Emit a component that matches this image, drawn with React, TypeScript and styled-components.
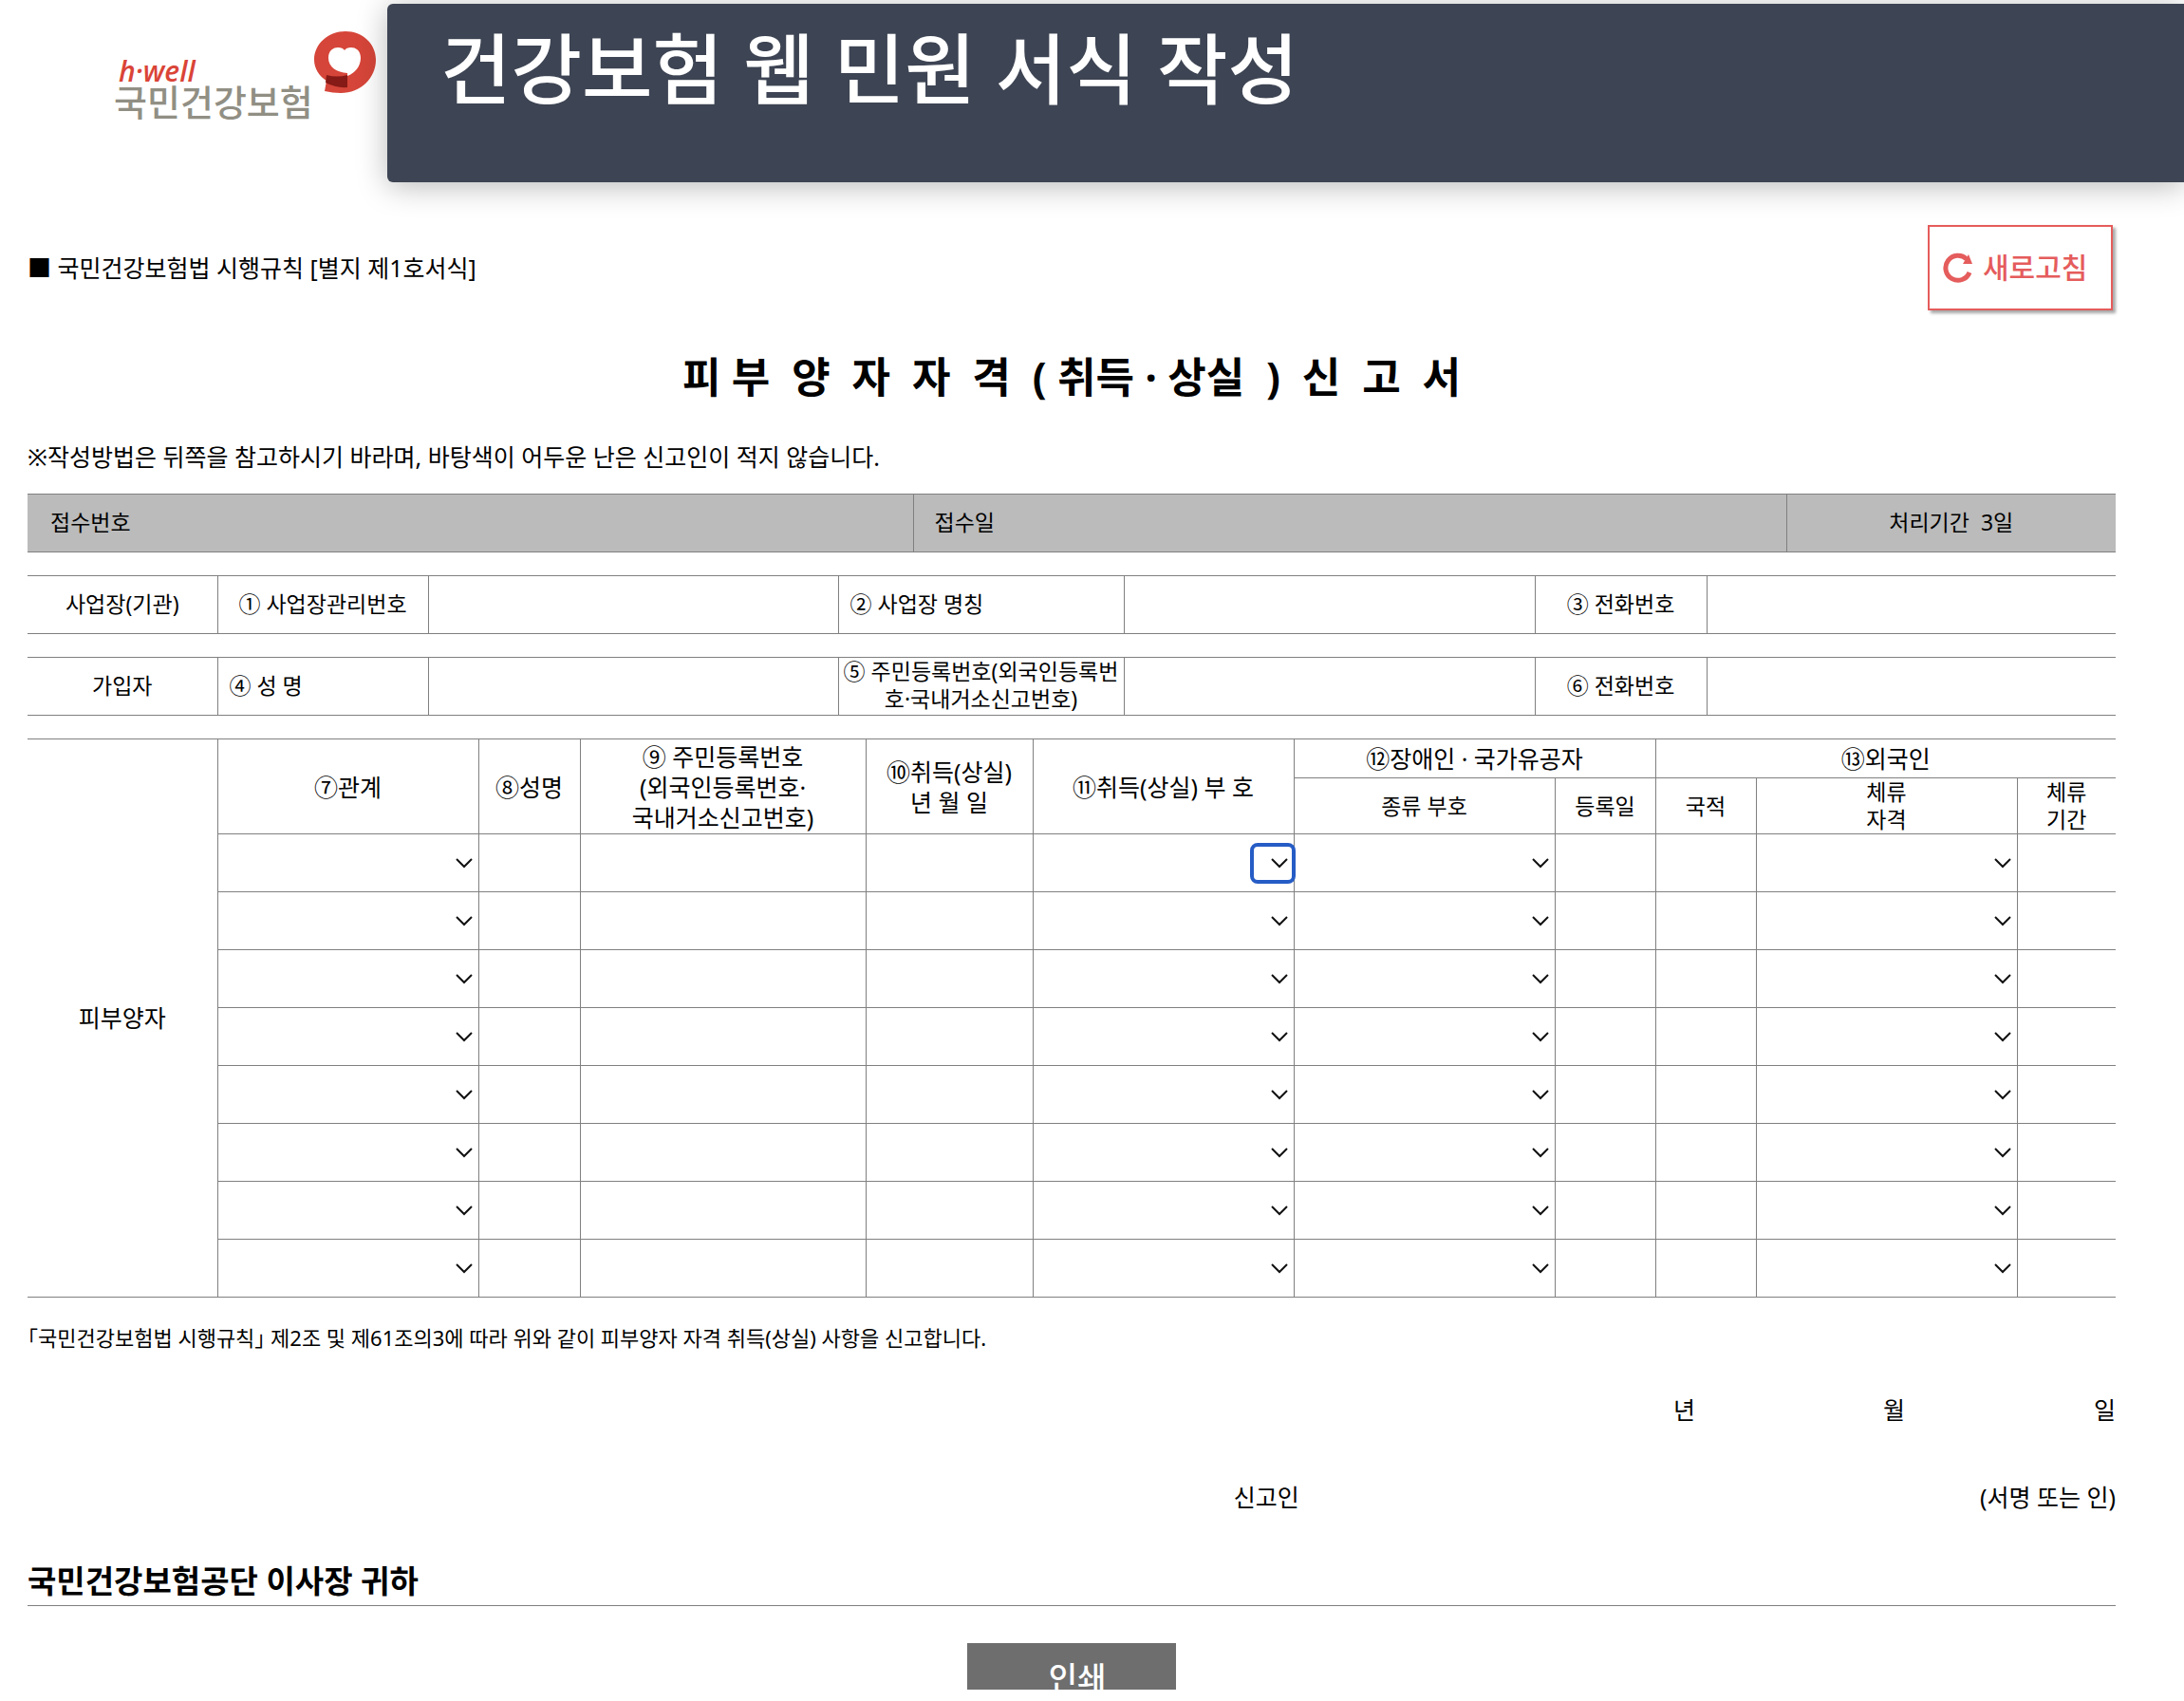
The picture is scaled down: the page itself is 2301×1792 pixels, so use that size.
import React from "react";
import styled, { createGlobalStyle } from "styled-components";

const line = "#808080";
const COLS = [200, 275, 107, 301, 176, 275, 275, 106, 106, 275, 104];

const Global = createGlobalStyle`
  * { box-sizing: border-box; }
  body {
    margin: 0;
    background: #fff;
    color: #000;
    font-family: "Noto Sans", "Noto Sans CJK KR", sans-serif;
    font-size: 25px;
    line-height: 32px;
  }
`;

const Page = styled.div`
  overflow: hidden;
`;

const Header = styled.header`
  display: flex;
  padding-top: 4px;
  height: 192px;
`;

const Brand = styled.a`
  width: 408px;
  flex: none;
  padding: 28px 0 0 120px;
`;

const Banner = styled.div`
  flex: 1;
  border-radius: 6px 0 0 6px;
  background: #3d4453;
  box-shadow: 0 4px 32px rgba(0, 0, 0, 0.28);
  padding: 8px 56px;
`;

const BannerTitle = styled.h1`
  margin: 0;
  color: #fff;
  font-size: 81px;
  line-height: 120px;
  font-weight: 500;
`;

const Form = styled.main`
  padding: 45px 72px 0 29px;
`;

const TopLine = styled.div`
  display: flex;
  justify-content: space-between;
  align-items: center;
`;

const Refresh = styled.button`
  display: flex;
  align-items: center;
  gap: 10px;
  width: 195px;
  height: 90px;
  margin-right: 3px;
  padding: 0 14px;
  border: 2px solid #e55c5c;
  background: #fff;
  box-shadow: 3px 3px 3px rgba(0, 0, 0, 0.35);
  color: #e55c5c;
  font: inherit;
  font-size: 30px;
  font-weight: 500;
  white-space: nowrap;
`;

const Title = styled.h2`
  margin: 38px 0 0;
  font-size: 44px;
  line-height: 64px;
  font-weight: 700;
  text-align: center;
  white-space: pre;
`;

const Note = styled.p`
  margin: 36px 0 23px;
`;

const Table = styled.table`
  width: 100%;
  table-layout: fixed;
  border-collapse: collapse;
  margin-bottom: 24px;
`;

const Cell = styled.th<{ $align?: string; $small?: boolean; $pad?: number }>`
  border: 1px solid ${line};
  height: 61px;
  padding: 0 ${(p) => p.$pad ?? 0}px 2px;
  font-weight: 400;
  font-size: ${(p) => (p.$small ? 23 : 25)}px;
  line-height: ${(p) => (p.$small ? 29 : 32)}px;
  text-align: ${(p) => p.$align ?? "center"};
  white-space: pre;
  &:first-child[data-edge] { border-left: 0; }
  &:last-child { border-right: 0; }
`;

const ReceiptTable = styled(Table)`
  background: #bbb;
`;

const GroupHead = styled(Cell)`
  height: 41px;
  padding-bottom: 0;
`;

const SubHead = styled(Cell)`
  height: 59px;
  padding-bottom: 0;
`;

const Entry = styled.td`
  border: 1px solid ${line};
  height: 61px;
  padding: 0;
  &:last-child { border-right: 0; }
`;

const Field = styled.input`
  display: block;
  width: 100%;
  height: 40px;
  padding: 0 8px;
  border: 0;
  background: transparent;
  font: inherit;
`;

const PickerBox = styled.div<{ $focused?: boolean }>`
  display: flex;
  align-items: center;
  position: relative;
  width: ${(p) => (p.$focused ? "48px" : "auto")};
  height: 43px;
  margin: 0 -2px 0 auto;
  border: 4px solid ${(p) => (p.$focused ? "#265cc5" : "transparent")};
  border-radius: 8px;
  background: ${(p) => (p.$focused ? "#fff" : "transparent")};
  svg {
    position: absolute;
    right: 3px;
    pointer-events: none;
  }
`;

const Picker = styled.select`
  width: 100%;
  height: 100%;
  border: 0;
  outline: 0;
  appearance: none;
  background: transparent;
  font: inherit;
`;

const Declaration = styled.p`
  margin: 0;
  padding-top: 4px;
  font-size: 22px;
  line-height: 29px;
  font-feature-settings: "halt";
`;

const DateLine = styled.div`
  display: grid;
  grid-template-columns: 1fr 221px 222px;
  margin-top: 45px;
  text-align: right;
`;

const SignLine = styled.div`
  display: grid;
  grid-template-columns: 609fr 391fr;
  margin-top: 60px;
  text-align: right;
`;

const Recipient = styled.h3`
  margin: 49px 0 0;
  padding-bottom: 1px;
  border-bottom: 1px solid ${line};
  font-size: 33px;
  line-height: 48px;
`;

const Actions = styled.div`
  display: flex;
  justify-content: center;
  align-items: flex-start;
  height: 88px;
  padding-top: 39px;
  overflow: hidden;
`;

const Print = styled.button`
  width: 220px;
  height: 74px;
  flex: none;
  padding: 0 0 0 12px;
  border: 0;
  background: #6e6e6e;
  color: #fff;
  font: inherit;
  font-size: 33px;
  font-weight: 500;
`;

const Chevron = () => (
  <svg width="20" height="14" viewBox="0 0 20 14" fill="none" stroke="#111" strokeWidth="2">
    <path d="M2 3l8 8 8-8" />
  </svg>
);

const Logo = () => (
  <svg width="280" height="100" viewBox="0 0 280 100" role="img" aria-label="h-well 국민건강보험">
    <text x="5" y="54" fill="#da4437" fontFamily="Open Sans" fontSize="30" fontStyle="italic" fontWeight="600">h·well</text>
    <text x="0" y="90" fill="#918f84" fontFamily="Noto Sans CJK KR" fontSize="38" fontWeight="500">국민건강보험</text>
    <path d="M244 1c18 0 32 13 32 30 0 19-16 35-37 35-6 0-11-1-17-2l2-11c-8-5-13-13-13-22 0-17 15-30 33-30z" fill="#d64539" />
    <path d="M243 21c3-5 17-5 17 8 0 9-6 16-14 19v-3c-11-1-20-6-20-16 0-13 14-13 17-8z" fill="#fff" />
    <path d="M224 47q11 3 22 0v13q-12 1-23-5z" fill="#861a16" />
  </svg>
);

const RefreshIcon = () => (
  <svg width="32" height="32" viewBox="0 0 32 32" fill="none">
    <path d="M28 21A13 13 0 1 1 25 7" stroke="#e55c5c" strokeWidth="5" />
    <path d="M27 2l4 10H21z" fill="#e55c5c" />
  </svg>
);

const Cols = ({ widths }: { widths: number[] }) => {
  const total = widths.reduce((a, b) => a + b, 0);
  return (
    <colgroup>
      {widths.map((w, i) => (
        <col key={i} style={{ width: `${(w / total) * 100}%` }} />
      ))}
    </colgroup>
  );
};

const InfoTable = ({ group, fields }: { group: string; fields: { label: string; align?: string; pad?: number }[] }) => (
  <Table>
    <Cols widths={[200, 222, 432, 301, 433, 181, 431]} />
    <tbody>
      <tr>
        <Cell data-edge $small scope="row">{group}</Cell>
        {fields.map((f) => (
          <React.Fragment key={f.label}>
            <Cell $small scope="row" $align={f.align} $pad={f.pad}>{f.label}</Cell>
            <Entry><Field aria-label={f.label} /></Entry>
          </React.Fragment>
        ))}
      </tr>
    </tbody>
  </Table>
);

const ENTRY_LABELS = ["관계", "성명", "주민등록번호", "취득(상실) 년월일", "취득(상실) 부호", "종류 부호", "등록일", "국적", "체류자격", "체류기간"];
const PICKERS = [0, 4, 5, 8];

export default function App() {
  return (
    <Page>
      <Global />
      <Header>
        <Brand href="#"><Logo /></Brand>
        <Banner><BannerTitle>건강보험 웹 민원 서식 작성</BannerTitle></Banner>
      </Header>
      <Form>
        <TopLine>
          <span>■ 국민건강보험법 시행규칙 [별지 제1호서식]</span>
          <Refresh type="button"><RefreshIcon />새로고침</Refresh>
        </TopLine>
        <Title>{"피 부  양  자  자  격  ( 취득 · 상실  )  신  고  서"}</Title>
        <Note>※작성방법은 뒤쪽을 참고하시기 바라며, 바탕색이 어두운 난은 신고인이 적지 않습니다.</Note>

        <ReceiptTable>
          <Cols widths={[933, 920, 347]} />
          <tbody>
            <tr>
              <Cell data-edge $small $align="left" $pad={24}>접수번호</Cell>
              <Cell $small $align="left" $pad={22}>접수일</Cell>
              <Cell $small>{"처리기간  3일"}</Cell>
            </tr>
          </tbody>
        </ReceiptTable>

        <InfoTable
          group="사업장(기관)"
          fields={[{ label: "① 사업장관리번호" }, { label: "② 사업장 명칭", align: "left", pad: 12 }, { label: "③ 전화번호" }]}
        />
        <InfoTable
          group="가입자"
          fields={[{ label: "④ 성 명", align: "left", pad: 12 }, { label: "⑤ 주민등록번호(외국인등록번\n호·국내거소신고번호)" }, { label: "⑥ 전화번호" }]}
        />

        <Table>
          <Cols widths={COLS} />
          <tbody>
            <tr>
              <Cell data-edge rowSpan={10}>피부양자</Cell>
              <GroupHead rowSpan={2}>⑦관계</GroupHead>
              <GroupHead rowSpan={2}>⑧성명</GroupHead>
              <GroupHead rowSpan={2}>{"⑨ 주민등록번호\n(외국인등록번호·\n국내거소신고번호)"}</GroupHead>
              <GroupHead rowSpan={2}>{"⑩취득(상실)\n년 월 일"}</GroupHead>
              <GroupHead rowSpan={2}>⑪취득(상실) 부 호</GroupHead>
              <GroupHead colSpan={2}>⑫장애인 · 국가유공자</GroupHead>
              <GroupHead colSpan={3}>⑬외국인</GroupHead>
            </tr>
            <tr>
              <SubHead $small>종류 부호</SubHead>
              <SubHead $small>등록일</SubHead>
              <SubHead $small>국적</SubHead>
              <SubHead $small>{"체류\n자격"}</SubHead>
              <SubHead $small>{"체류\n기간"}</SubHead>
            </tr>
            {Array.from({ length: 8 }, (_, row) => (
              <tr key={row}>
                {ENTRY_LABELS.map((label, col) => (
                  <Entry key={label}>
                    {PICKERS.includes(col) ? (
                      <PickerBox $focused={row === 0 && col === 4}>
                        <Picker aria-label={`${label} ${row + 1}`}><option value="" /></Picker>
                        <Chevron />
                      </PickerBox>
                    ) : (
                      <Field aria-label={`${label} ${row + 1}`} />
                    )}
                  </Entry>
                ))}
              </tr>
            ))}
          </tbody>
        </Table>

        <Declaration>「국민건강보험법 시행규칙」 제2조 및 제61조의3에 따라 위와 같이 피부양자 자격 취득(상실) 사항을 신고합니다.</Declaration>
        <DateLine><span>년</span><span>월</span><span>일</span></DateLine>
        <SignLine><span>신고인</span><span>(서명 또는 인)</span></SignLine>
        <Recipient>국민건강보험공단 이사장 귀하</Recipient>
        <Actions><Print type="button">인쇄</Print></Actions>
      </Form>
    </Page>
  );
}
